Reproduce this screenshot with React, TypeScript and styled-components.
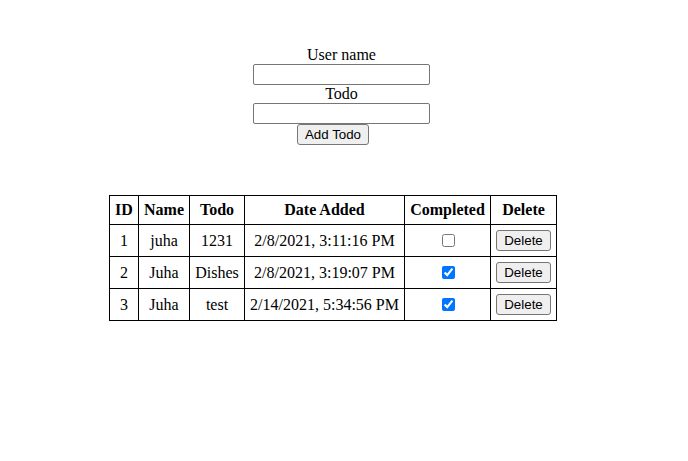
import React from 'react'
import styled, { createGlobalStyle } from 'styled-components'

interface Todo {
    id: number
    name: string
    todo: string
    date: string
    completed: boolean
}

const todos: Todo[] = [
    { id: 1, name: 'juha', todo: '1231', date: '2/8/2021, 3:11:16 PM', completed: false },
    { id: 2, name: 'Juha', todo: 'Dishes', date: '2/8/2021, 3:19:07 PM', completed: true },
    { id: 3, name: 'Juha', todo: 'test', date: '2/14/2021, 5:34:56 PM', completed: true },
]

const columns = [
    { title: 'ID', width: 18 },
    { title: 'Name', width: 40 },
    { title: 'Todo', width: 44 },
    { title: 'Date Added', width: 149 },
    { title: 'Completed', width: 75 },
    { title: 'Delete', width: 55 },
]

const App = () => {
    return (
        <>
            <GlobalStyle />
            <Page>
                <Form onSubmit={(e) => e.preventDefault()}>
                    <Label htmlFor="username">User name</Label>
                    <TextInput id="username" type="text" />
                    <Label htmlFor="todo">Todo</Label>
                    <TextInput id="todo" type="text" />
                    <AddButton type="submit">Add Todo</AddButton>
                </Form>
                <Table>
                    <thead>
                        <tr>
                            {columns.map((c) => (
                                <Th key={c.title} $width={c.width}>{c.title}</Th>
                            ))}
                        </tr>
                    </thead>
                    <tbody>
                        {todos.map((t) => (
                            <tr key={t.id}>
                                <Td>{t.id}</Td>
                                <Td>{t.name}</Td>
                                <Td>{t.todo}</Td>
                                <Td>{t.date}</Td>
                                <Td>
                                    <Check type="checkbox" defaultChecked={t.completed} />
                                </Td>
                                <Td>
                                    <DeleteButton>Delete</DeleteButton>
                                </Td>
                            </tr>
                        ))}
                    </tbody>
                </Table>
            </Page>
        </>
    )
}

const GlobalStyle = createGlobalStyle`
    body {
        margin: 8px;
        background: #ffffff;
        color: #000000;
        font-family: "Liberation Serif", "Times New Roman", serif;
        font-size: 16px;
    }
`;

const Page = styled.div`
    display: flex;
    flex-direction: column;
    padding-top: 38px;
`;

const Form = styled.form`
    display: flex;
    flex-direction: column;
    align-items: center;
    padding-right: 5px;
    margin: 0;
`;

const Label = styled.label`
    display: block;
    height: 18px;
    line-height: 18px;
    font-size: 16px;
`;

const TextInput = styled.input`
    box-sizing: border-box;
    width: 177px;
    height: 21px;
    margin: 0;
    padding: 1px 2px;
    border: 1px solid #767676;
    border-radius: 2px;
    background: #ffffff;
    font-family: "Liberation Sans", Arial, sans-serif;
    font-size: 13.33px;
`;

const NativeButton = styled.button`
    box-sizing: border-box;
    height: 21px;
    margin: 0;
    padding: 1px 6px;
    border: 1px solid #767676;
    border-radius: 3px;
    background: #efefef;
    color: #000000;
    font-family: "Liberation Sans", Arial, sans-serif;
    font-size: 13.33px;
    line-height: 17px;
`;

const AddButton = styled(NativeButton)`
    width: 72px;
    margin-right: 17px;
`;

const DeleteButton = styled(NativeButton)`
    width: 55px;
    vertical-align: middle;
`;

const Table = styled.table`
    border-collapse: collapse;
    margin-top: 50px;
    margin-left: 101px;
    align-self: flex-start;
`;

const Th = styled.th<{ $width: number }>`
    box-sizing: content-box;
    width: ${(p) => p.$width}px;
    border: 1px solid #000000;
    padding: 5px;
    height: 18px;
    font-weight: bold;
    text-align: center;
    line-height: 18px;
    white-space: nowrap;
`;

const Td = styled.td`
    border: 1px solid #000000;
    padding: 5px;
    height: 21px;
    text-align: center;
    vertical-align: middle;
    line-height: 18px;
    white-space: nowrap;
`;

const Check = styled.input`
    width: 13px;
    height: 13px;
    margin: 3px 3px 3px 4px;
    vertical-align: middle;
    accent-color: #0075ff;
`;

export default App;
